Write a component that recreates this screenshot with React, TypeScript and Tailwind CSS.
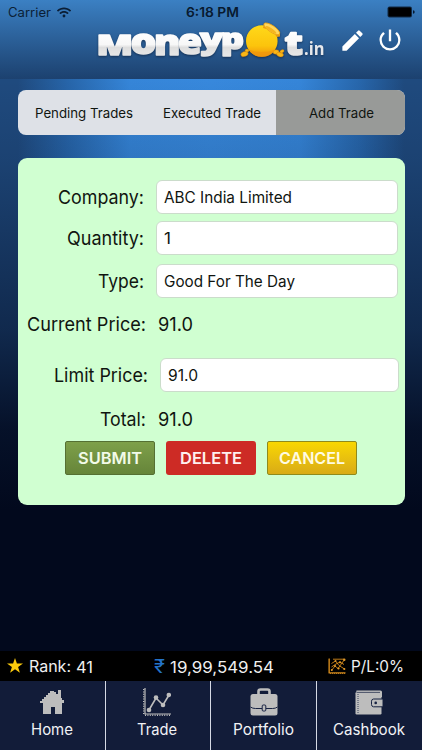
import React from "react";
import { FaWifi } from "react-icons/fa";
import { MdEdit, MdPowerSettingsNew } from "react-icons/md";

interface FieldRowProps {
  label: string;
  value: string;
  className: string;
  labelClass: string;
  labelWidth: number;
  valueWidth: number;
  boxed?: boolean;
}

// textLength keeps every label at a fixed width regardless of font hinting
const FitText: React.FC<{
  text: string;
  width: number;
  size: number;
  weight?: number;
  fill?: string;
}> = ({ text, width, size, weight = 400, fill = "#101510" }) => (
  <svg width={width} height={28} className="block shrink-0 overflow-visible">
    <text
      x={0}
      y={14 + size * 0.364}
      fontSize={size}
      fontWeight={weight}
      fill={fill}
      textLength={width}
      lengthAdjust="spacingAndGlyphs"
    >
      {text}
    </text>
  </svg>
);

const FieldRow: React.FC<FieldRowProps> = ({
  label,
  value,
  className,
  labelClass,
  labelWidth,
  valueWidth,
  boxed = true,
}) => (
  <div className={`flex items-center ${className}`}>
    <div className={`flex justify-end ${labelClass}`}>
      <FitText text={label} width={labelWidth} size={18.8} />
    </div>
    {boxed ? (
      <div className="ml-3 flex h-[34px] flex-1 items-center rounded-[6px] border border-[#cbdccb] bg-white pl-[7px]">
        <FitText text={value} width={valueWidth} size={15.5} />
      </div>
    ) : (
      <div className="ml-3">
        <FitText text={value} width={valueWidth} size={18.8} />
      </div>
    )}
  </div>
);

const Logo = () => (
  <svg
    width="230"
    height="42"
    viewBox="96 20 230 42"
    className="overflow-visible font-['Open_Sans','Liberation_Sans',sans-serif] drop-shadow-[0_1px_1px_rgba(10,25,50,0.6)]"
  >
    <defs>
      <linearGradient id="letters" gradientUnits="userSpaceOnUse" x1="0" y1="31" x2="0" y2="56">
        <stop offset="0" stopColor="#fff" />
        <stop offset="0.5" stopColor="#f7f7f7" />
        <stop offset="0.62" stopColor="#dedede" />
        <stop offset="1" stopColor="#e8e8e8" />
      </linearGradient>
      <linearGradient id="gold" x1="0" y1="0" x2="0" y2="1">
        <stop offset="0" stopColor="#ffd91a" />
        <stop offset="0.65" stopColor="#fcc40c" />
        <stop offset="1" stopColor="#f0920a" />
      </linearGradient>
    </defs>
    <g fill="url(#letters)" stroke="url(#letters)" strokeWidth="1.6" strokeLinejoin="round" fontWeight="800">
      <text x="96.5" y="53.6" fontSize="29" textLength="36.5" lengthAdjust="spacingAndGlyphs">M</text>
      <text x="130.5" y="53.4" fontSize="36" textLength="26" lengthAdjust="spacingAndGlyphs">o</text>
      <text x="154" y="53.6" fontSize="36" textLength="26.5" lengthAdjust="spacingAndGlyphs">n</text>
      <text x="178" y="53.4" fontSize="36" textLength="24" lengthAdjust="spacingAndGlyphs">e</text>
      <text x="200" y="48" fontSize="28" textLength="23" lengthAdjust="spacingAndGlyphs">y</text>
      <text x="221" y="48" fontSize="28" textLength="23" lengthAdjust="spacingAndGlyphs">p</text>
      <text x="284.5" y="53.6" fontSize="34" textLength="18.5" lengthAdjust="spacingAndGlyphs">t</text>
    </g>
    <text x="304" y="53.6" fontSize="17" fontWeight="700" fill="#e6e8ec" textLength="20.5" lengthAdjust="spacingAndGlyphs">
      .in
    </text>
    <g fill="#f9b616" stroke="#c9780b" strokeWidth="0.4">
      <ellipse cx="244.5" cy="53" rx="3.8" ry="2.5" transform="rotate(-20 244.5 53)" />
      <ellipse cx="247" cy="49.5" rx="2" ry="1.6" />
      <ellipse cx="276" cy="51" rx="3" ry="2.2" />
      <ellipse cx="280" cy="53.5" rx="3.5" ry="2.2" transform="rotate(15 280 53.5)" />
      <ellipse cx="282" cy="50.3" rx="2.2" ry="1.5" transform="rotate(-25 282 50.3)" />
    </g>
    <ellipse cx="261.8" cy="40" rx="15.8" ry="15.8" fill="url(#gold)" />
    <path d="M248.5 48.5q13 5 27 0q-5 7.5-13.5 7.5t-13.5-7.5z" fill="#ef960d" opacity="0.7" />
    <path d="M264 22.5q9 0 16 9v4l-3 .5q-5-7-14-9z" fill="#e99c12" />
    <ellipse cx="271.8" cy="27.8" rx="9.3" ry="3.3" fill="#ffd65a" stroke="#e9a217" strokeWidth="0.8" transform="rotate(34 271.8 27.8)" />
    <ellipse cx="271" cy="28.8" rx="6.5" ry="1.6" fill="#f6b51e" transform="rotate(34 271 28.8)" />
  </svg>
);

const StatusBar = () => (
  <div className="flex h-6 items-center pl-2 pr-[7px]">
    <FitText text="Carrier" width={43} size={12.6} fill="#0b1e35" />
    <FaWifi className="ml-[6px] h-[13px] w-[14px] text-[#0b1e35]" />
    <div className="ml-[115px]">
      <FitText text="6:18 PM" width={53} size={13} weight={600} fill="#081a30" />
    </div>
    <svg width="28" height="12" viewBox="0 0 28 12" className="ml-auto">
      <rect x="0.5" y="0.5" width="24.5" height="11" rx="2" fill="#122a45" />
      <rect x="1.5" y="1.5" width="22.5" height="9" rx="1" fill="#000" />
      <path d="M26 4.2q1.7.3 1.7 1.8T26 7.8z" fill="#081a30" />
    </svg>
  </div>
);

const HomeIcon = () => (
  <svg width="24" height="25" viewBox="0 0 24 25" fill="#bdbdbd" shapeRendering="crispEdges">
    <path d="M11 1h3v1h2v2h2V0h3v8h1v2h2v3h-2v11h-7v-7h-4v7H3V13H0v-2h2V9h2V7h2V5h2V3h2V1z" />
  </svg>
);

const TradeIcon = () => (
  <svg width="28" height="28" viewBox="0 0 28 28" fill="none" stroke="#bdbdbd">
    <path d="M2 0v26h26" strokeWidth="1.2" />
    <path d="M.7 1v25M2 27.2h26" strokeWidth="1.4" strokeDasharray="1 1.4" />
    <path d="M6 22L13 10L20 17L26 7" strokeWidth="1.6" />
    <g fill="#bdbdbd" stroke="none">
      <circle cx="6" cy="22" r="2.3" />
      <circle cx="13" cy="9.5" r="2.3" />
      <circle cx="20" cy="17" r="2.3" />
      <circle cx="25.8" cy="7" r="2.3" />
    </g>
  </svg>
);

const PortfolioIcon = () => (
  <svg width="28" height="28" viewBox="0 0 28 28">
    <path d="M8.5 6V3.5q0-2 2-2h7q2 0 2 2V6" fill="none" stroke="#bdbdbd" strokeWidth="2.6" />
    <rect x="0.5" y="6" width="27" height="21.5" rx="2.5" fill="#bdbdbd" />
    <path d="M.5 19q2 1.5 5 1.5H12M16 20.5h6.5q3 0 5-1.5" fill="none" stroke="#172242" strokeWidth="1" />
    <rect x="12.2" y="17" width="3.6" height="6" rx="1" fill="#bdbdbd" stroke="#172242" strokeWidth="1" />
  </svg>
);

const CashbookIcon = () => (
  <svg width="28" height="25" viewBox="0 0 28 25">
    <path d="M1.5.5h24q1.5 0 1.5 1.5v5h-2V3H1z" fill="#bdbdbd" />
    <rect x="0.5" y="2" width="26" height="22.5" rx="1.2" fill="#bdbdbd" />
    <path d="M1.5 2.4H25" stroke="#172242" strokeWidth="0.7" />
    <path d="M3 4v20" stroke="#172242" strokeWidth="0.8" strokeDasharray="1 1" />
    <path d="M18.5 9H28v7.8h-9.5q-2-.3-2-2.2v-3.4q0-2 2-2.2z" fill="#bdbdbd" stroke="#172242" strokeWidth="1" />
    <circle cx="20.7" cy="12.9" r="1.3" fill="#172242" />
  </svg>
);

const StarIcon = () => (
  <svg width="16" height="15" viewBox="0 0 16 15" fill="#fccb0c">
    <path d="M8 0l1.9 5.4H16l-4.9 3.5 1.8 5.9L8 11.3l-4.9 3.5 1.8-5.9L0 5.4h6.1z" />
  </svg>
);

const ProfitIcon = () => (
  <svg width="18" height="16" viewBox="0 0 18 16" fill="none" stroke="#d48a1c">
    <path d="M1.2.5v14.3H17.5" strokeWidth="1.3" />
    <path d="M0 1.5v13M2 15.5h16" strokeWidth="0.8" strokeDasharray="1 1" />
    <path d="M3.5 12.5L7 8L10 10.5L16.5 1.5M3.5 5.5L7.5 3L11 7.5L16.5 11M3.5 9L8 6L12 4L16 6.5M5 1.2h11" strokeWidth="0.9" />
    <g fill="#e19a2a" stroke="none">
      <circle cx="3.8" cy="12" r="1" />
      <circle cx="7" cy="8" r="1.1" />
      <circle cx="10.5" cy="10.5" r="1.1" />
      <circle cx="16.3" cy="1.8" r="1.2" />
      <circle cx="12" cy="4.3" r="1.1" />
      <circle cx="16.3" cy="11" r="1.1" />
      <circle cx="7.5" cy="3" r="1" />
    </g>
  </svg>
);

const navItems = [
  { label: "Home", width: 42, icon: <HomeIcon />, cell: "w-[105px] pr-px" },
  { label: "Trade", width: 40, icon: <TradeIcon />, cell: "w-[105px] border-l border-[#d5d9e4] pr-[2px]" },
  { label: "Portfolio", width: 61, icon: <PortfolioIcon />, cell: "w-[106px] border-l border-[#d5d9e4]" },
  { label: "Cashbook", width: 72, icon: <CashbookIcon />, cell: "flex-1 border-l border-[#d5d9e4] pr-[2px]" },
];

const App: React.FC = () => {
  return (
    <div className="flex h-[750px] w-[422px] flex-col overflow-hidden bg-[linear-gradient(180deg,rgba(2,9,29,0)_80px,rgba(2,9,29,0.12)_160px,rgba(2,9,29,0.5)_330px,rgba(2,9,29,0.88)_430px,#02091d_510px),linear-gradient(90deg,#1f4a7e_0px,#1f4a7e_18px,#2766ab_70px,#3585d8_130px,#3788dc_211px,#3585d8_300px,#2766ab_360px,#1f4a7e_404px,#1f4a7e_422px)] font-[Inter,'Liberation_Sans',sans-serif]">
      {/* Header */}
      <div className="flex h-[79px] shrink-0 flex-col bg-linear-to-b from-[#3b80c3] to-[#1c416f]">
        <StatusBar />
        <div className="-mt-[3.5px] flex h-[42px] items-center pl-24">
          <Logo />
          <MdEdit className="-mt-[3px] ml-[13px] h-[27px] w-[27px] text-white" />
          <MdPowerSettingsNew className="-mt-[3px] ml-[10px] h-[28px] w-[28px] text-white" />
        </div>
      </div>

      {/* Tabs */}
      <div className="mx-[17.5px] mt-[11px] grid h-[45px] shrink-0 grid-cols-3 overflow-hidden rounded-[8px] bg-[#dee1e7]">
        <div className="flex items-center justify-center pl-[3px]">
          <FitText text="Pending Trades" width={98} size={13.4} />
        </div>
        <div className="flex items-center justify-center pl-[2px]">
          <FitText text="Executed Trade" width={98} size={13.4} />
        </div>
        <div className="flex items-center justify-center bg-[#989a98] pl-[3px]">
          <FitText text="Add Trade" width={65} size={13.4} />
        </div>
      </div>

      {/* Order form */}
      <div className="mx-[17.5px] mt-[22.5px] flex h-[347.5px] shrink-0 flex-col rounded-[9px] bg-[#d0ffd1] pr-[6.5px] pt-[22px]">
        <FieldRow label="Company:" value="ABC India Limited" className="h-[34px]" labelClass="w-[126.5px]" labelWidth={86} valueWidth={128} />
        <FieldRow label="Quantity:" value="1" className="mt-[7.5px] h-[34px]" labelClass="w-[126.5px]" labelWidth={77} valueWidth={7} />
        <FieldRow label="Type:" value="Good For The Day" className="mt-[8.5px] h-[34px]" labelClass="w-[126.5px]" labelWidth={46} valueWidth={131} />
        <FieldRow label="Current Price:" value="91.0" className="mt-3 h-7" labelClass="w-[128px]" labelWidth={119} valueWidth={35} boxed={false} />
        <FieldRow label="Limit Price:" value="91.0" className="-mr-px mt-[20.5px] h-[34px]" labelClass="w-[130.5px]" labelWidth={94} valueWidth={30} />
        <FieldRow label="Total:" value="91.0" className="mt-[12.5px] h-7" labelClass="w-[128px]" labelWidth={46} valueWidth={35} boxed={false} />
        <div className="ml-[47.5px] mt-[8.5px] flex gap-[11px]">
          <button className="flex h-[34px] w-[90px] items-center justify-center rounded-[2px] border border-[#557033] bg-linear-to-b from-[#7ea04a] to-[#66853a]">
            <FitText text="SUBMIT" width={64} size={16.5} weight={600} fill="#f2fbe9" />
          </button>
          <button className="flex h-[34px] w-[90px] items-center justify-center rounded-[3px] bg-[#cd2b25]">
            <FitText text="DELETE" width={62} size={16.5} weight={600} fill="#fff0ee" />
          </button>
          <button className="flex h-[34px] w-[90px] items-center justify-center rounded-[2px] border border-[#8f8a1c] bg-linear-to-b from-[#f9d700] to-[#d9ab15]">
            <FitText text="CANCEL" width={66} size={16.5} weight={600} fill="#fffbe2" />
          </button>
        </div>
      </div>

      {/* Account summary */}
      <div className="mt-auto flex h-[30.5px] shrink-0 items-center bg-black pl-[7px] pr-[18px]">
        <StarIcon />
        <div className="ml-[6px]">
          <FitText text="Rank:" width={42} size={15.8} fill="#f0f0f0" />
        </div>
        <div className="ml-[5px] mt-[3px]">
          <FitText text="41" width={17} size={15.8} fill="#f0f0f0" />
        </div>
        <div className="ml-[61px]">
          <FitText text="₹" width={11} size={18} fill="#2473c8" />
        </div>
        <div className="ml-[5px] mt-[3px]">
          <FitText text="19,99,549.54" width={104} size={15.8} fill="#f0f0f0" />
        </div>
        <div className="ml-auto flex items-center gap-[5px]">
          <ProfitIcon />
          <FitText text="P/L:0%" width={53} size={15.8} fill="#f0f0f0" />
        </div>
      </div>

      {/* Bottom navigation */}
      <div className="flex h-[69px] shrink-0 bg-[#121c39]">
        {navItems.map((item) => (
          <div key={item.label} className={`flex flex-col items-center pt-[7px] ${item.cell}`}>
            <div className="-mb-px flex h-7 items-center">{item.icon}</div>
            <FitText text={item.label} width={item.width} size={15.2} fill="#f1f2f5" />
          </div>
        ))}
      </div>
    </div>
  );
};

export default App;
